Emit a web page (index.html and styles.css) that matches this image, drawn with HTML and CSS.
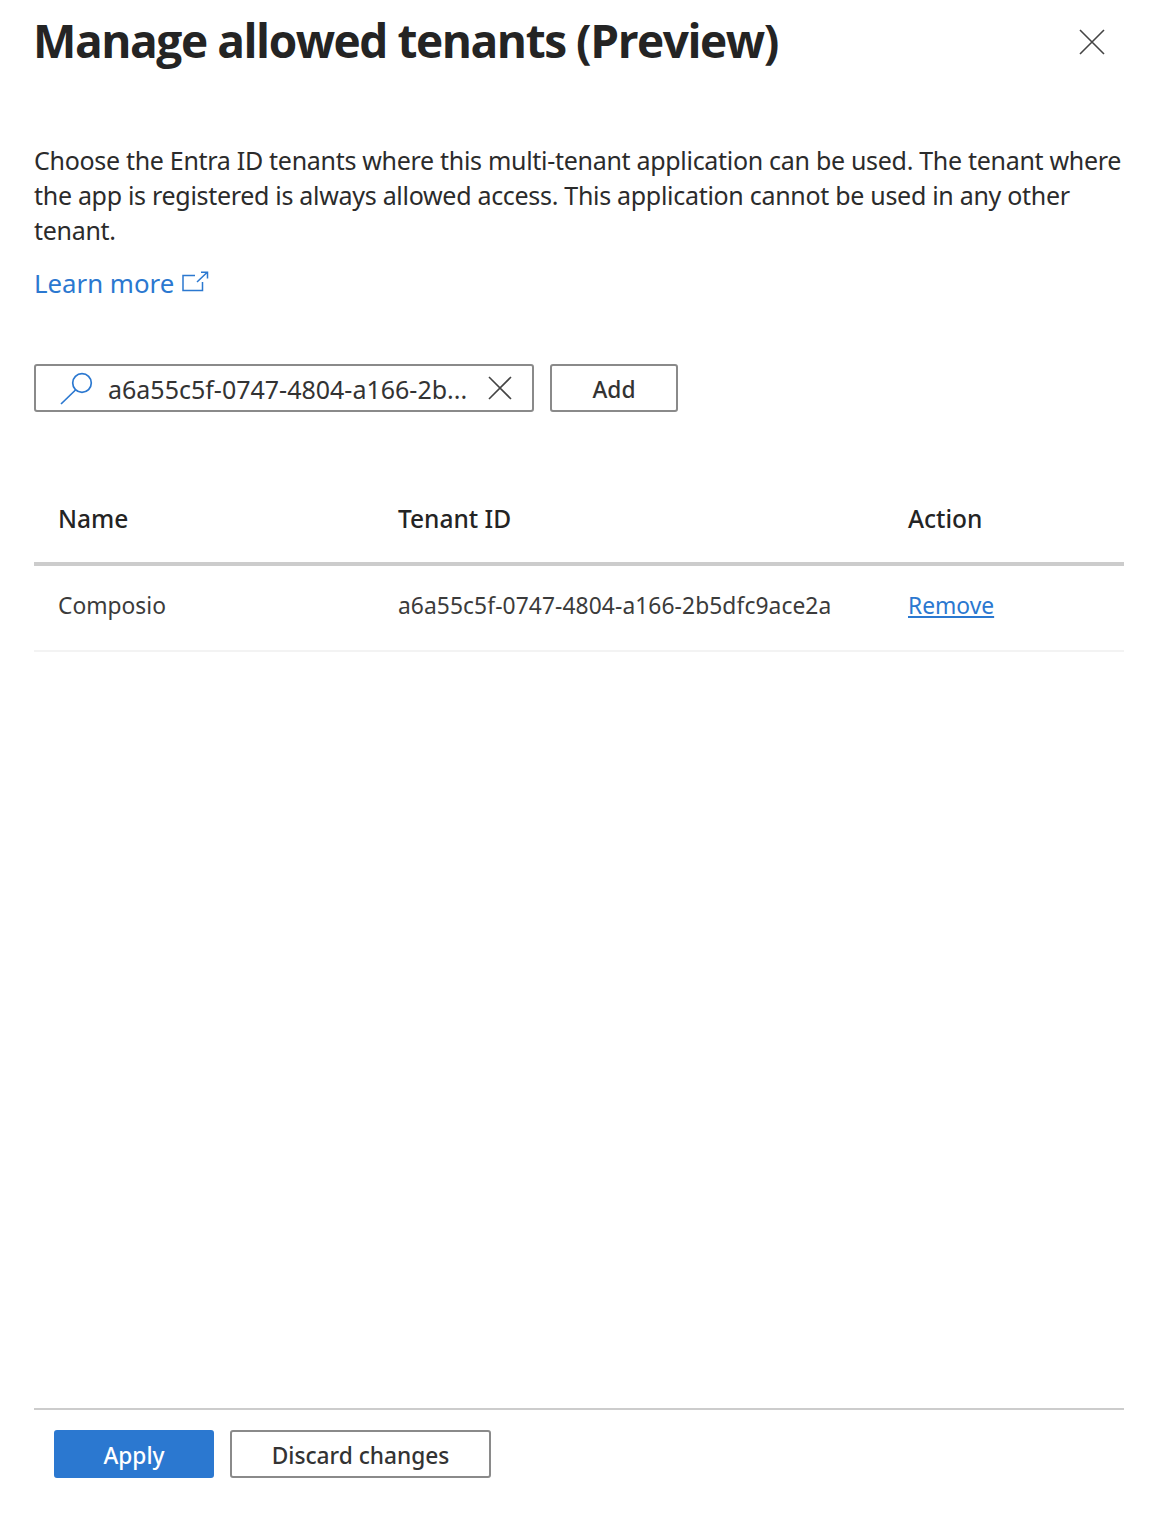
FILE: index.html
```html
<!DOCTYPE html>
<html lang="en">
<head>
    <meta charset="UTF-8">
    <title>Manage allowed tenants</title>
    <link rel="stylesheet" href="styles.css">
</head>
<body>
    <div class="panel">
        <div class="header">
            <h1>Manage allowed tenants (Preview)</h1>
            <button class="close" aria-label="Close">
                <svg width="26" height="26" viewBox="0 0 26 26"><path d="M1 1L25 25M25 1L1 25" stroke="#444" stroke-width="1.6" fill="none"/></svg>
            </button>
        </div>
        <p class="intro">Choose the Entra ID tenants where this multi-tenant application can be used. The tenant where the app is registered is always allowed access. This application cannot be used in any other tenant.</p>
        <a class="learn" href="#">Learn more
            <svg width="27" height="22" viewBox="0 0 27 22"><path d="M13 4.500H1V19.500H20.500V11M15 11L25 1.500M19 1.200H25.500V7.500" stroke="#2b78d0" stroke-width="1.5" fill="none"/></svg>
        </a>
        <div class="search-row">
            <div class="search">
                <svg class="search-icon" width="34" height="34" viewBox="0 0 34 34"><circle cx="22" cy="12" r="9.300" stroke="#2b78d0" stroke-width="1.700" fill="none"/><path d="M15.500 19L1 33" stroke="#2b78d0" stroke-width="1.700" fill="none"/></svg>
                <span class="search-text">a6a55c5f-0747-4804-a166-2b...</span>
                <svg class="search-clear" width="26" height="26" viewBox="0 0 26 26"><path d="M2 2L24 24M24 2L2 24" stroke="#444" stroke-width="1.600" fill="none"/></svg>
            </div>
            <button class="btn add">Add</button>
        </div>
        <div class="table">
            <div class="row head">
                <div>Name</div>
                <div>Tenant ID</div>
                <div>Action</div>
            </div>
            <div class="row item">
                <div>Composio</div>
                <div class="tenant-id">a6a55c5f-0747-4804-a166-2b5dfc9ace2a</div>
                <div><a href="#">Remove</a></div>
            </div>
        </div>
        <div class="footer">
            <button class="btn primary">Apply</button>
            <button class="btn discard">Discard changes</button>
        </div>
    </div>
</body>
</html>
```

FILE: styles.css
```css
*{
    margin: 0;
    padding: 0;
    box-sizing: border-box;
}
body{
    background-color: #fff;
    color: #2b2b2b;
    font-family: "Noto Sans", "Open Sans", sans-serif;
}
.panel{
    display: flex;
    flex-direction: column;
    min-height: 1530px;
    padding: 0 40px 52px 34px;
}
.header{
    display: flex;
    justify-content: space-between;
    align-items: center;
    height: 84px;
}
h1{
    font-family: "Open Sans", sans-serif;
    font-size: 46px;
    font-weight: 700;
    letter-spacing: -1.45px;
    line-height: 76px;
    margin-left: -1px;
    margin-bottom: 4px;
    color: #242424;
}
.close{
    background: none;
    border: none;
    margin-right: 19px;
    display: flex;
}
.intro{
    margin-top: 59px;
    font-size: 25px;
    line-height: 35px;
    letter-spacing: -0.3px;
}
.learn{
    display: inline-flex;
    align-items: flex-start;
    gap: 8px;
    margin-top: 17px;
    font-size: 25.8px;
    line-height: 36px;
    color: #2b78d0;
    text-decoration: none;
    align-self: flex-start;
}
.learn svg{
    margin-top: 6px;
}
.search-row{
    display: flex;
    gap: 16px;
    margin-top: 63px;
}
.search{
    display: flex;
    align-items: center;
    width: 500px;
    height: 48px;
    padding-left: 24px;
    border: 2px solid #8a8a8a;
    border-radius: 3px;
}
.search-text{
    margin-left: 14px;
    padding-top: 2px;
    font-size: 25px;
    color: #333;
    flex: 1;
    white-space: nowrap;
}
.search-clear{
    margin-right: 19px;
}
.btn{
    height: 48px;
    padding-top: 2px;
    font-family: inherit;
    font-size: 22.7px;
    font-weight: 500;
    background-color: #fff;
    color: #333;
    border: 2px solid #8a8a8a;
    border-radius: 3px;
}
.add{
    width: 128px;
}
.table{
    margin-top: 52px;
}
.row{
    display: grid;
    grid-template-columns: 340px 510px 1fr;
    align-items: center;
    padding-left: 24px;
}
.head{
    height: 102px;
    padding-top: 10px;
    font-size: 24.5px;
    font-weight: 500;
    color: #242424;
    border-bottom: 4px solid #ccc;
}
.item{
    height: 86px;
    padding-bottom: 6px;
    font-size: 22.8px;
    color: #3b3b3b;
    border-bottom: 2px solid #f3f3f3;
}
.tenant-id{
    letter-spacing: 0.08px;
}
.item a{
    color: #2b78d0;
}
.footer{
    display: flex;
    gap: 16px;
    margin-top: auto;
    padding: 20px 0 0 20px;
    border-top: 2px solid #ccc;
}
.primary{
    width: 160px;
    background-color: #2b78d0;
    border-color: #2b78d0;
    color: #fff;
}
.discard{
    width: 261px;
}
```
